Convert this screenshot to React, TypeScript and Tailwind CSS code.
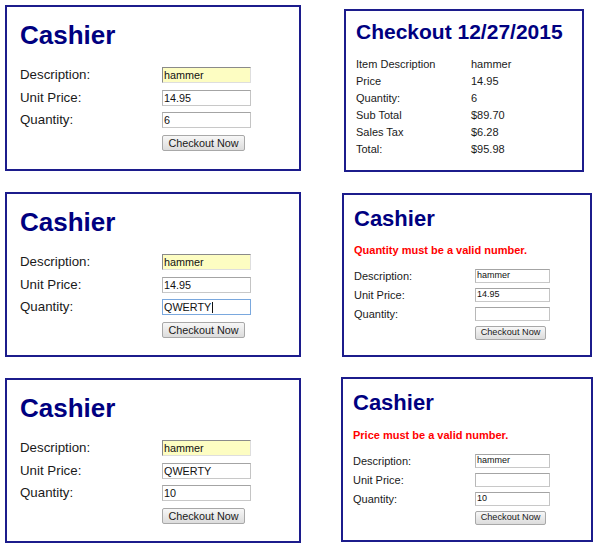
import React from "react";

type FieldKind = "yellow" | "normal" | "focus";

function Field({
  value,
  kind = "normal",
  caret = false,
  w,
  h,
  text,
}: {
  value: string;
  kind?: FieldKind;
  caret?: boolean;
  w: string;
  h: string;
  text: string;
}) {
  const border =
    kind === "yellow"
      ? "bg-[#fdfdc2] border-t-[#8a8a8a] border-l-[#8a8a8a] border-r-[#dedede] border-b-[#dedede]"
      : kind === "focus"
      ? "bg-white border-[#7aa8de]"
      : "bg-white border-t-[#a4a4a4] border-l-[#b8b8b8] border-r-[#c4c4c4] border-b-[#c8c8c8]";
  return (
    <div
      className={`${w} ${h} ${text} ${border} border box-border flex items-center pl-[1px] text-[#111] whitespace-nowrap overflow-hidden`}
    >
      <span>{value}</span>
      {caret && <span className="inline-block w-[1px] h-[11px] bg-[#111] ml-[1px]" />}
    </div>
  );
}

function Btn({ w, h, text }: { w: string; h: string; text: string }) {
  return (
    <div
      className={`${w} ${h} ${text} box-border border border-[#a8a8a8] rounded-[2px] bg-linear-to-b from-[#f7f7f7] to-[#dcdcdc] text-[#1a1a1a] flex items-center justify-center whitespace-nowrap`}
    >
      Checkout Now
    </div>
  );
}

function LeftCashier({
  desc,
  price,
  qty,
  focusQty = false,
  h,
}: {
  desc: string;
  price: string;
  qty: string;
  focusQty?: boolean;
  h: string;
}) {
  const label = "w-[142px] shrink-0 text-[13.3px] leading-[15px] text-[#1a1a1a]";
  const fw = "w-[89px]";
  const fh = "h-[16px]";
  const ft = "text-[10.8px]";
  return (
    <div className={`w-[296px] ${h} shrink-0 border-2 border-[#1c1c8c] box-border pl-[13px] pt-[15px]`}>
      <div className="text-[26px] leading-[26px] font-bold text-[#000080]">Cashier</div>
      <div className="mt-[19px] flex flex-col">
        <div className="flex items-start">
          <div className={label}>Description:</div>
          <Field value={desc} kind="yellow" w={fw} h={fh} text={ft} />
        </div>
        <div className="flex items-start mt-[7px]">
          <div className={label}>Unit Price:</div>
          <Field value={price} w={fw} h={fh} text={ft} />
        </div>
        <div className="flex items-start mt-[6px]">
          <div className={label}>Quantity:</div>
          <Field value={qty} kind={focusQty ? "focus" : "normal"} caret={focusQty} w={fw} h={fh} text={ft} />
        </div>
        <div className="flex items-start mt-[7px]">
          <div className="w-[142px] shrink-0" />
          <Btn w="w-[83px]" h="h-[16px]" text="text-[10.8px]" />
        </div>
      </div>
    </div>
  );
}

function RightCashier({
  error,
  price,
  qty,
  w,
  h,
  errMt,
  labelW,
}: {
  error: string;
  price: string;
  qty: string;
  w: string;
  h: string;
  errMt: string;
  labelW: string;
}) {
  const label = `${labelW} shrink-0 text-[11px] leading-[14px] text-[#1a1a1a]`;
  const fw = "w-[75px]";
  const fh = "h-[14px]";
  const ft = "text-[9px]";
  return (
    <div className={`${w} ${h} shrink-0 border-2 border-[#1c1c8c] box-border pl-[10px] pt-[13px]`}>
      <div className="text-[22px] leading-[22px] font-bold text-[#000080]">Cashier</div>
      <div className={`${errMt} text-[11px] leading-[13px] font-bold text-[#ff0000]`}>{error}</div>
      <div className="mt-[12px] flex flex-col gap-[5px]">
        <div className="flex items-start">
          <div className={label}>Description:</div>
          <Field value="hammer" w={fw} h={fh} text={ft} />
        </div>
        <div className="flex items-start">
          <div className={label}>Unit Price:</div>
          <Field value={price} w={fw} h={fh} text={ft} />
        </div>
        <div className="flex items-start">
          <div className={label}>Quantity:</div>
          <Field value={qty} w={fw} h={fh} text={ft} />
        </div>
        <div className="flex items-start">
          <div className={`${labelW} shrink-0`} />
          <Btn w="w-[71px]" h="h-[14px]" text="text-[9.2px]" />
        </div>
      </div>
    </div>
  );
}

function Checkout() {
  const rows: [string, string][] = [
    ["Item Description", "hammer"],
    ["Price", "14.95"],
    ["Quantity:", "6"],
    ["Sub Total", "$89.70"],
    ["Sales Tax", "$6.28"],
    ["Total:", "$95.98"],
  ];
  return (
    <div className="w-[240px] h-[163px] shrink-0 border-2 border-[#1c1c8c] box-border pl-[10px] pt-[10px]">
      <div className="text-[21px] leading-[21px] font-bold text-[#000080] whitespace-nowrap">
        Checkout 12/27/2015
      </div>
      <div className="mt-[14px] flex flex-col">
        {rows.map(([k, v]) => (
          <div key={k} className="flex text-[11px] leading-[17px] text-[#1a1a1a]">
            <div className="w-[115px] shrink-0">{k}</div>
            <div>{v}</div>
          </div>
        ))}
      </div>
    </div>
  );
}

export default function App() {
  return (
    <div className="w-[600px] h-[548px] bg-white overflow-hidden font-['Liberation_Sans',Arial,sans-serif]">
      <div className="h-[187px] flex items-start">
        <div className="ml-[5px] mt-[5px]">
          <LeftCashier desc="hammer" price="14.95" qty="6" h="h-[166px]" />
        </div>
        <div className="ml-[43px] mt-[9px]">
          <Checkout />
        </div>
      </div>
      <div className="h-[186px] flex items-start">
        <div className="ml-[5px] mt-[5px]">
          <LeftCashier desc="hammer" price="14.95" qty="QWERTY" focusQty h="h-[165px]" />
        </div>
        <div className="ml-[41px] mt-[6px]">
          <RightCashier
            error="Quantity must be a valid number."
            price="14.95"
            qty=""
            w="w-[250px]"
            h="h-[164px]"
            errMt="mt-[14px]"
            labelW="w-[121px]"
          />
        </div>
      </div>
      <div className="h-[175px] flex items-start">
        <div className="ml-[5px] mt-[5px]">
          <LeftCashier desc="hammer" price="QWERTY" qty="10" h="h-[165px]" />
        </div>
        <div className="ml-[40px] mt-[4px]">
          <RightCashier
            error="Price must be a valid number."
            price=""
            qty="10"
            w="w-[252px]"
            h="h-[165px]"
            errMt="mt-[15px]"
            labelW="w-[122px]"
          />
        </div>
      </div>
    </div>
  );
}
